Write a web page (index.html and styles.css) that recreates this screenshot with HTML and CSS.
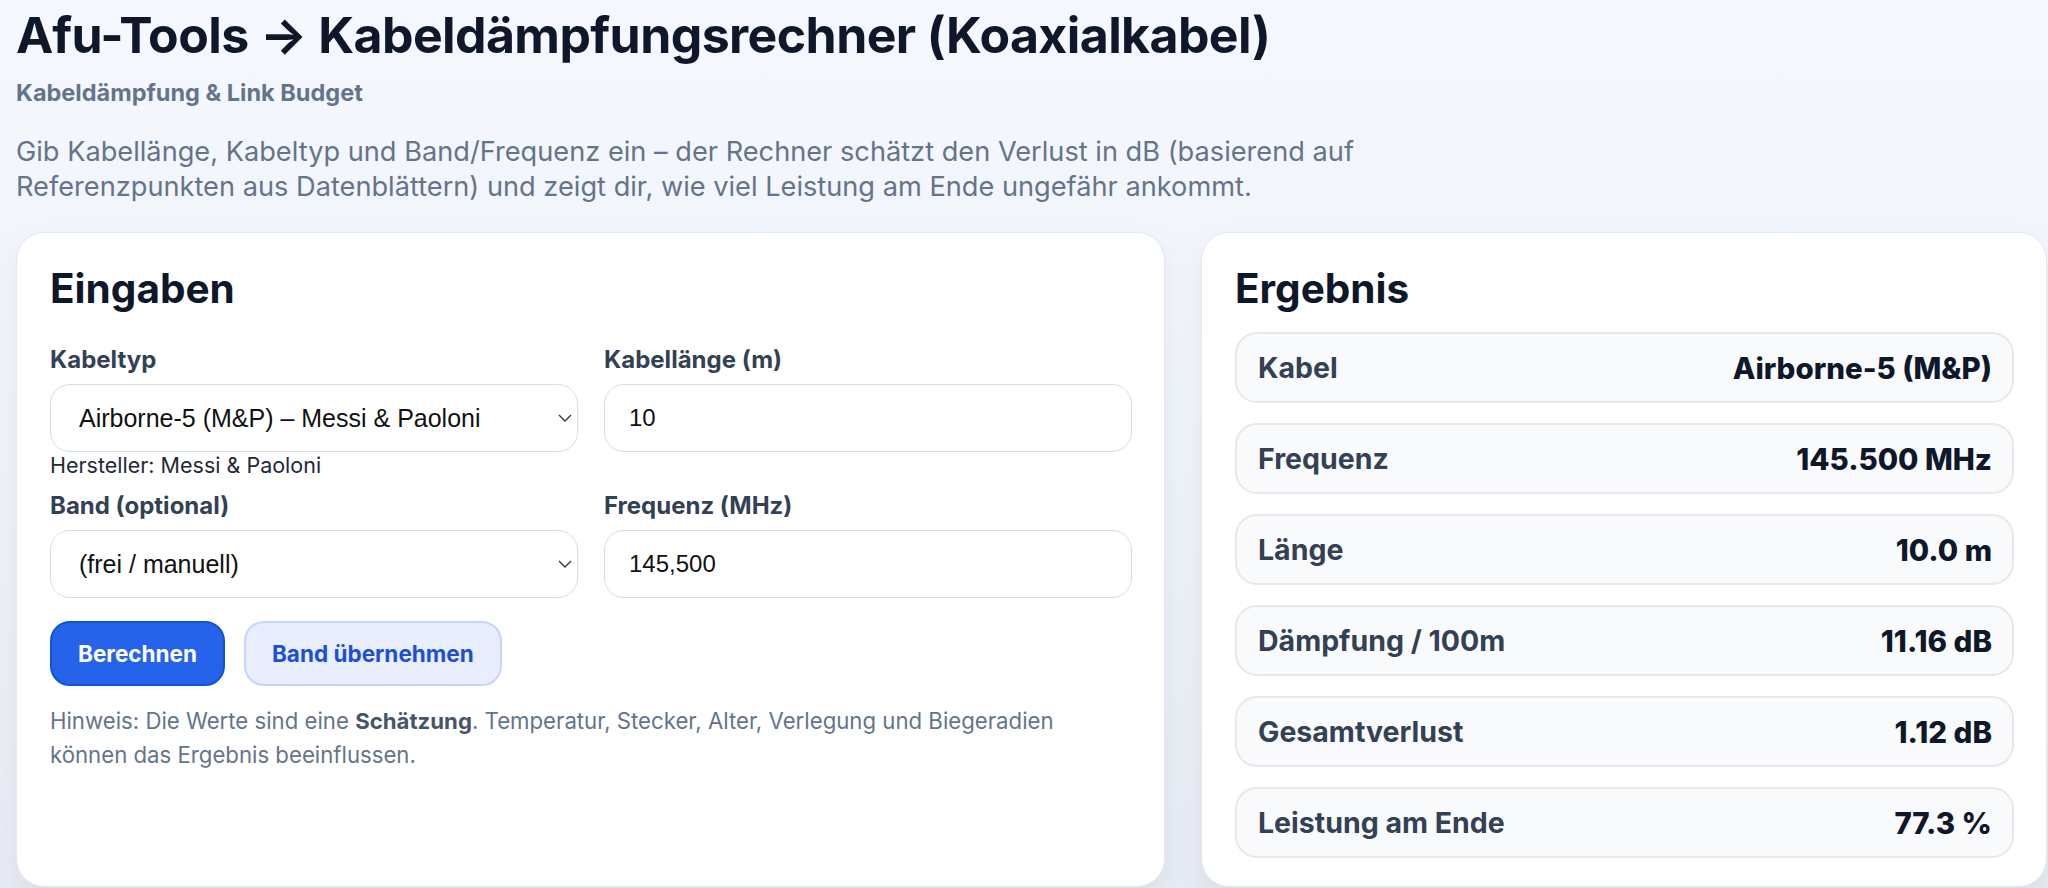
FILE: index.html
```html
<!DOCTYPE html>
<html lang="de">
<head>
  <meta charset="UTF-8">
  <meta name="viewport" content="width=device-width, initial-scale=1.0">
  <title>Kabeldämpfungsrechner</title>
  <link rel="stylesheet" href="styles.css">
</head>
<body>
  <header class="head">
    <h1>Afu-Tools → Kabeldämpfungsrechner (Koaxialkabel)</h1>
    <div class="kicker">Kabeldämpfung &amp; Link Budget</div>
    <p class="lead">Gib Kabellänge, Kabeltyp und Band/Frequenz ein – der Rechner schätzt den Verlust in dB (basierend auf Referenzpunkten aus Datenblättern) und zeigt dir, wie viel Leistung am Ende ungefähr ankommt.</p>
  </header>

  <main class="layout">
    <!-- Eingaben -->
    <section class="card">
      <h2>Eingaben</h2>
      <div class="form-grid">
        <div class="field">
          <label for="kabel">Kabeltyp</label>
          <div class="select-wrap">
            <select id="kabel">
              <option>Airborne-5 (M&amp;P) – Messi &amp; Paoloni</option>
            </select>
            <svg class="chevron" viewBox="0 0 14 8" width="14" height="8"><path d="M1 1l6 6 6-6" fill="none" stroke="#333" stroke-width="1.3"/></svg>
          </div>
          <div class="hint">Hersteller: Messi &amp; Paoloni</div>
        </div>
        <div class="field">
          <label for="laenge">Kabellänge (m)</label>
          <input type="text" id="laenge" value="10">
        </div>
        <div class="field">
          <label for="band">Band (optional)</label>
          <div class="select-wrap">
            <select id="band">
              <option>(frei / manuell)</option>
            </select>
            <svg class="chevron" viewBox="0 0 14 8" width="14" height="8"><path d="M1 1l6 6 6-6" fill="none" stroke="#333" stroke-width="1.3"/></svg>
          </div>
        </div>
        <div class="field">
          <label for="freq">Frequenz (MHz)</label>
          <input type="text" id="freq" value="145,500">
        </div>
      </div>

      <div class="actions">
        <button class="btn primary">Berechnen</button>
        <button class="btn soft">Band übernehmen</button>
      </div>

      <p class="note">Hinweis: Die Werte sind eine <strong>Schätzung</strong>. Temperatur, Stecker, Alter, Verlegung und Biegeradien können das Ergebnis beeinflussen.</p>
    </section>

    <!-- Ergebnis -->
    <section class="card">
      <h2>Ergebnis</h2>
      <div class="rows">
        <div class="row"><span class="k">Kabel</span><span class="v">Airborne-5 (M&amp;P)</span></div>
        <div class="row"><span class="k">Frequenz</span><span class="v">145.500 MHz</span></div>
        <div class="row"><span class="k">Länge</span><span class="v">10.0 m</span></div>
        <div class="row"><span class="k">Dämpfung / 100m</span><span class="v">11.16 dB</span></div>
        <div class="row"><span class="k">Gesamtverlust</span><span class="v">1.12 dB</span></div>
        <div class="row"><span class="k">Leistung am Ende</span><span class="v">77.3 %</span></div>
      </div>
    </section>
  </main>
</body>
</html>
```

FILE: styles.css
```css
body {
  margin: 0;
  padding: 0 1px 0 16px;
  font-family: Inter, "Noto Sans", sans-serif;
  color: #0f172a;
  background: linear-gradient(180deg, #f5f8ff 0%, #eef2f9 55%, #e7ebf3 100%);
  min-height: 888px;
  box-sizing: border-box;
}
.head {
  padding-top: 6px;
}
h1 {
  margin: 0;
  font-size: 50px;
  line-height: 58px;
  font-weight: 700;
  letter-spacing: -0.6px;
  color: #0f172a;
}
.kicker {
  margin-top: 15px;
  font-size: 23.5px;
  line-height: 28px;
  font-weight: 700;
  color: #64748b;
}
.lead {
  margin: 27px 0 0;
  max-width: 1420px;
  font-size: 27.2px;
  line-height: 35px;
  color: #64748b;
}
.layout {
  display: grid;
  grid-template-columns: 1149fr 846fr;
  gap: 36px;
  margin-top: 28px;
}
.card {
  background: #fff;
  border: 1px solid #e3e7ee;
  border-radius: 28px;
  padding: 33px 32px 28px 33px;
  box-shadow: 0 12px 30px rgba(15, 23, 42, 0.06);
}
h2 {
  margin: 0;
  font-size: 40.5px;
  line-height: 46px;
  font-weight: 700;
  color: #0f172a;
}
.form-grid {
  display: grid;
  grid-template-columns: 1fr 1fr;
  column-gap: 26px;
  row-gap: 14px;
  margin-top: 34px;
}
.field label {
  display: block;
  font-size: 24px;
  line-height: 28px;
  font-weight: 700;
  color: #334155;
  margin-bottom: 10px;
}
.select-wrap {
  position: relative;
}
select, input {
  display: block;
  width: 100%;
  height: 68px;
  box-sizing: border-box;
  border: 1.5px solid #d9dce1;
  border-radius: 20px;
  background: #fff;
  font-family: "Liberation Sans", Arial, sans-serif;
  font-size: 24px;
  color: #111;
  outline: none;
}
select {
  appearance: none;
  -webkit-appearance: none;
  padding: 0 40px 0 28px;
  font-size: 25px;
}
input {
  padding: 0 24px;
}
.chevron {
  position: absolute;
  right: 6px;
  top: 30px;
}
.hint {
  font-size: 21.5px;
  line-height: 26px;
  color: #1f2937;
}
.actions {
  display: flex;
  gap: 19px;
  margin-top: 23px;
}
.btn {
  height: 65px;
  padding: 0 26px;
  border-radius: 20px;
  font-family: Inter, sans-serif;
  font-size: 22.5px;
  font-weight: 700;
  cursor: pointer;
}
.btn.primary {
  background: #2563eb;
  border: 2.5px solid #0f56cc;
  color: #fff;
}
.btn.soft {
  background: #e8eefd;
  border: 2px solid #c5d5fa;
  color: #1d4ed8;
}
.note {
  margin: 18px 0 0;
  max-width: 1045px;
  font-size: 22.2px;
  line-height: 34px;
  color: #64748b;
}
.note strong {
  color: #475569;
}
.rows {
  display: flex;
  flex-direction: column;
  gap: 20px;
  margin-top: 20px;
}
.row {
  display: flex;
  justify-content: space-between;
  align-items: center;
  height: 71px;
  box-sizing: border-box;
  padding: 0 20px 0 21px;
  background: #f9fafb;
  border: 2px solid #e7e8eb;
  border-radius: 22px;
}
.row .k {
  font-size: 28.5px;
  font-weight: 700;
  color: #334155;
}
.row .v {
  font-size: 29.5px;
  font-weight: 800;
  color: #0f172a;
}
```
